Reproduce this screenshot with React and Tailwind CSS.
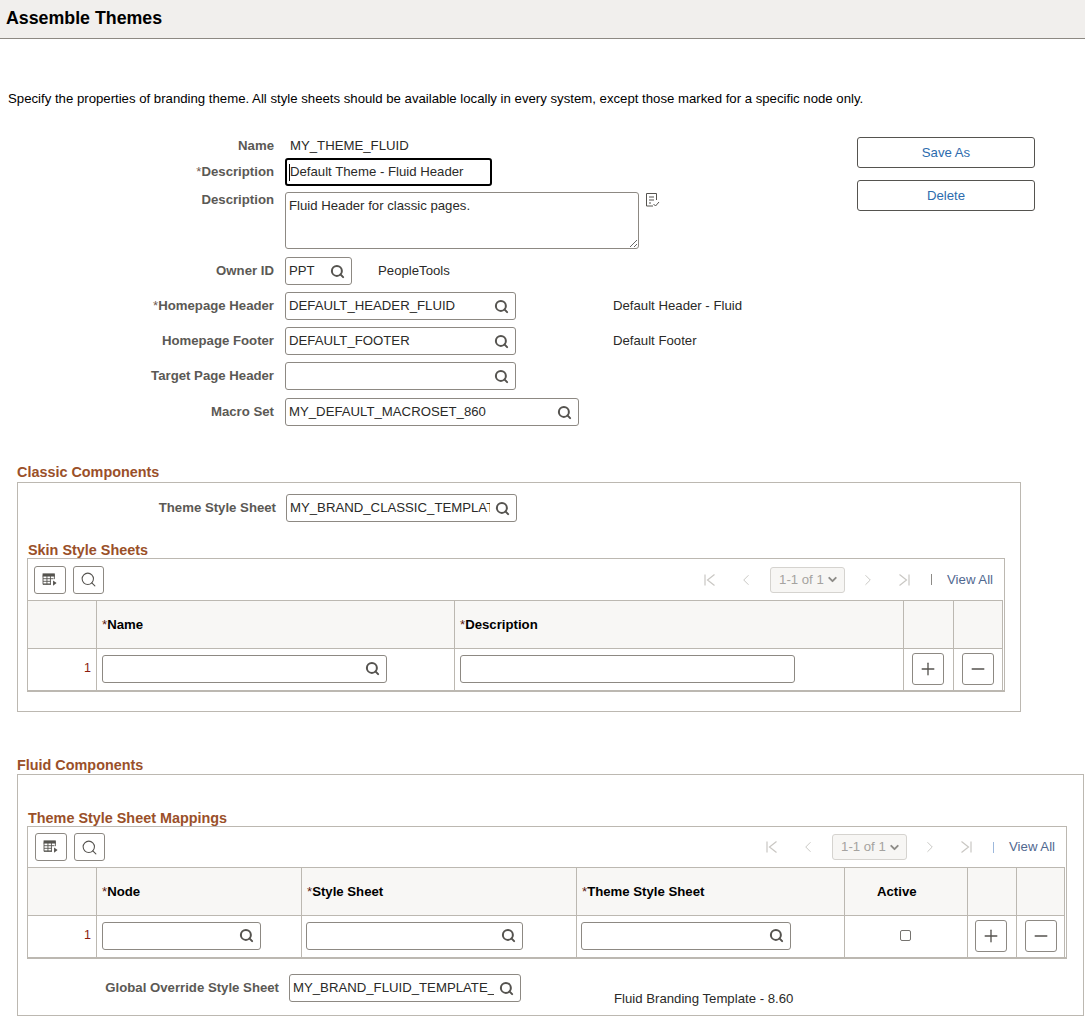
import { ChevronDown, ChevronLeft, ChevronRight, Minus, Plus, Search } from 'lucide-react';

const FONT = 'font-["Liberation_Sans",Arial,sans-serif]';

function Field({ value = '', width, icon = true, className = '' }) {
    return (
        <div className={`flex items-center h-[28px] bg-white border border-[#8d8983] rounded-[3px] pl-[3px] pr-[6px] ${width} ${className}`}>
            <input
                readOnly
                value={value}
                className="flex-1 min-w-0 bg-transparent outline-none text-[13.2px] text-[#2a2a28]"
            />
            {icon && <Search className="w-[15px] h-[15px] ml-[5px] shrink-0 text-[#55534f]" strokeWidth={3.2} />}
        </div>
    );
}

function FormRow({ label, required, top, height = 'h-[28px]', children, labelClass = 'items-center' }) {
    return (
        <div className={`flex ${height} ${top}`}>
            <div className={`w-[274px] flex justify-end text-[13.2px] leading-[16px] font-bold text-[#5b5955] ${labelClass}`}>
                {required && <span className="font-normal text-[#6f5a50]">*</span>}
                {label}
            </div>
            <div className="ml-[11px] flex items-center">{children}</div>
        </div>
    );
}

function SectionTitle({ children, className = '' }) {
    return <div className={`text-[14.4px] leading-[16px] font-bold text-[#9a5029] ${className}`}>{children}</div>;
}

function GridIcon() {
    return (
        <svg width="16" height="14" viewBox="0 0 18 16" fill="none" stroke="#55534f" strokeWidth="1">
            <rect x="1" y="1" width="13" height="2.5" fill="#55534f" />
            <path d="M1 3v10h9M1 6.5h12M1 9.5h9M1 12.5h9M5.5 3v10M9.5 3v10M14 3v4" />
            <path d="M12.5 8.5l4 3-4 3z" fill="#55534f" stroke="none" />
        </svg>
    );
}

function IconButton({ children, width = 'w-[32px]', height = 'h-[28px]' }) {
    return (
        <button className={`flex items-center justify-center bg-white border border-[#8d8983] rounded-[3px] ${width} ${height}`}>
            {children}
        </button>
    );
}

function Pager({ dividerColor }) {
    return (
        <div className="flex items-center text-[#c9c7c3]">
            <svg width="14" height="14" viewBox="0 0 14 14" fill="none" stroke="currentColor" strokeWidth="1.2">
                <path d="M2 1.5v11M11.5 1.5L4.5 7l7 5.5" />
            </svg>
            <ChevronLeft className="w-[18px] h-[18px] ml-[20px]" strokeWidth={1.3} />
            <div className="flex items-center justify-between h-[26px] w-[75px] ml-[15px] bg-[#f7f6f4] border border-[#d5d3cf] rounded-[3px] pl-[8px] pr-[5px] text-[13.2px] whitespace-nowrap text-[#a5a3a0]">
                1-1 of 1
                <ChevronDown className="w-[13px] h-[13px] text-[#8d8b87]" strokeWidth={3.5} />
            </div>
            <ChevronRight className="w-[18px] h-[18px] ml-[14px]" strokeWidth={1.3} />
            <svg width="14" height="14" viewBox="0 0 14 14" fill="none" stroke="currentColor" strokeWidth="1.2" className="ml-[20px]">
                <path d="M12 1.5v11M2.5 1.5L9.5 7l-7 5.5" />
            </svg>
            <span className={`w-px h-[11px] ml-[20px] ${dividerColor}`} />
            <span className="ml-[15px] text-[13.2px] text-[#51688f]">View All</span>
        </div>
    );
}

function Toolbar({ divider, className }) {
    return (
        <div className={`flex items-center justify-between pr-[10px] ${className}`}>
            <div className="flex items-center gap-[7px]">
                <IconButton><GridIcon /></IconButton>
                <IconButton width="w-[31px]">
                    <Search className="w-[17px] h-[17px] text-[#55534f]" strokeWidth={1.5} />
                </IconButton>
            </div>
            <Pager dividerColor={divider} />
        </div>
    );
}

function HeadCell({ children, className = '' }) {
    return (
        <div className={`flex items-center h-[48px] bg-[#f8f7f5] border-t border-l border-[#bcb8b1] pl-[5px] text-[13.2px] font-bold text-black ${className}`}>
            {children}
        </div>
    );
}

function BodyCell({ children, className = '' }) {
    return (
        <div className={`flex items-center h-[42px] pb-[2px] border-t border-l border-[#bcb8b1] ${className}`}>
            {children}
        </div>
    );
}

function Required({ children }) {
    return (
        <>
            <span className="font-normal text-[#5a1a10]">*</span>
            {children}
        </>
    );
}

function RowButtons() {
    return (
        <>
            <BodyCell className="justify-center pr-[2px]">
                <IconButton height="h-[32px]"><Plus className="w-[20px] h-[20px] text-[#55534f]" strokeWidth={1.6} /></IconButton>
            </BodyCell>
            <BodyCell className="justify-center border-r">
                <IconButton height="h-[32px]"><Minus className="w-[20px] h-[20px] text-[#55534f]" strokeWidth={1.6} /></IconButton>
            </BodyCell>
        </>
    );
}

export default function App() {
    return (
        <div className={`${FONT} w-[1085px] h-[1017px] overflow-hidden bg-white text-[13.2px] text-[#2a2a28]`}>
            <div className="flex items-center h-[39px] bg-[#f1efed] border-b border-[#8d8983] pl-[6px] pb-[2px]">
                <h1 className="text-[17.8px] font-bold text-black">Assemble Themes</h1>
            </div>

            <p className="mt-[52px] pl-[8px] text-[13.2px] leading-[16px] text-black">
                Specify the properties of branding theme. All style sheets should be available locally in every system, except those marked for a specific node only.
            </p>

            {/* Form and action buttons */}
            <div className="flex mt-[30px]">
                <div className="w-[857px]">
                    <FormRow label="Name" height="h-[18px]">
                        <span className="pl-[5px]">MY_THEME_FLUID</span>
                    </FormRow>
                    <FormRow label="Description" required top="mt-[3px]">
                        <div className="flex items-center w-[207px] h-[28px] border-2 border-black rounded-[3px] pl-[2px]">
                            <span className="w-px h-[17px] bg-black" />
                            <span>Default Theme - Fluid Header</span>
                        </div>
                    </FormRow>
                    <FormRow label="Description" height="h-[57px]" top="mt-[6px]" labelClass="items-start">
                        <div className="flex items-start h-full">
                            <textarea
                                readOnly
                                value="Fluid Header for classic pages."
                                className="block w-[354px] h-[57px] border border-[#8d8983] rounded-[3px] px-[3px] py-[5px] text-[13.2px] leading-[16px] outline-none"
                            />
                            <svg width="16" height="16" viewBox="0 0 16 16" fill="none" stroke="#55534f" strokeWidth="1" className="ml-[5px]">
                                <path d="M9 14H2.5V1.5h10V8M5 5h5M5 8h5M5 11h2M9.5 12l2 2 3.5-4" />
                            </svg>
                        </div>
                    </FormRow>
                    <FormRow label="Owner ID" top="mt-[8px]">
                        <Field value="PPT" width="w-[67px]" />
                        <span className="ml-[26px]">PeopleTools</span>
                    </FormRow>
                    <FormRow label="Homepage Header" required top="mt-[7px]">
                        <Field value="DEFAULT_HEADER_FLUID" width="w-[231px]" />
                        <span className="ml-[97px]">Default Header - Fluid</span>
                    </FormRow>
                    <FormRow label="Homepage Footer" top="mt-[7px]">
                        <Field value="DEFAULT_FOOTER" width="w-[231px]" />
                        <span className="ml-[97px]">Default Footer</span>
                    </FormRow>
                    <FormRow label="Target Page Header" top="mt-[7px]">
                        <Field width="w-[231px]" />
                    </FormRow>
                    <FormRow label="Macro Set" top="mt-[8px]">
                        <Field value="MY_DEFAULT_MACROSET_860" width="w-[294px]" />
                    </FormRow>
                </div>
                <div className="flex flex-col gap-[12px] w-[178px]">
                    <button className="h-[31px] bg-white border border-[#55534f] rounded-[3px] text-[13.2px] text-[#2c6cae]">Save As</button>
                    <button className="h-[31px] bg-white border border-[#55534f] rounded-[3px] text-[13.2px] text-[#2c6cae]">Delete</button>
                </div>
            </div>

            {/* Classic Components */}
            <SectionTitle className="mt-[38px] ml-[17px]">Classic Components</SectionTitle>
            <div className="ml-[17px] mt-[2px] w-[1004px] h-[230px] border border-[#bcb8b1] pl-[9px]">
                <div className="flex items-center mt-[11px]">
                    <div className="w-[249px] text-right font-bold text-[#5b5955]">Theme Style Sheet</div>
                    <Field value="MY_BRAND_CLASSIC_TEMPLATE" width="w-[231px]" className="ml-[10px]" />
                </div>
                <SectionTitle className="mt-[20px] ml-[1px]">Skin Style Sheets</SectionTitle>
                <div className="w-[978px] border border-[#bcb8b1] border-b-2 pr-[1px]">
                    <Toolbar className="h-[41px] pl-[6px]" divider="bg-[#8d8b87]" />
                    <div className="grid grid-cols-[68px_358px_449px_50px_50px]">
                        <HeadCell className="border-l-0" />
                        <HeadCell><Required>Name</Required></HeadCell>
                        <HeadCell><Required>Description</Required></HeadCell>
                        <HeadCell />
                        <HeadCell className="border-r" />
                        <BodyCell className="border-l-0 justify-end pr-[5px] text-[12.5px] text-[#8c1c0f]">1</BodyCell>
                        <BodyCell className="pl-[5px]"><Field width="w-[285px]" /></BodyCell>
                        <BodyCell className="pl-[5px]"><Field width="w-[335px]" icon={false} /></BodyCell>
                        <RowButtons />
                    </div>
                </div>
            </div>

            {/* Fluid Components */}
            <SectionTitle className="mt-[45px] ml-[17px]">Fluid Components</SectionTitle>
            <div className="ml-[17px] mt-[1px] w-[1067px] h-[242px] border border-[#bcb8b1] pl-[9px]">
                <SectionTitle className="mt-[35px] ml-[1px]">Theme Style Sheet Mappings</SectionTitle>
                <div className="w-[1040px] border border-[#bcb8b1] border-b-2 pr-[1px]">
                    <Toolbar className="h-[40px] pl-[7px]" divider="bg-[#9db8dc]" />
                    <div className="grid grid-cols-[68px_205px_275px_268px_123px_49px_49px]">
                        <HeadCell className="border-l-0" />
                        <HeadCell><Required>Node</Required></HeadCell>
                        <HeadCell><Required>Style Sheet</Required></HeadCell>
                        <HeadCell><Required>Theme Style Sheet</Required></HeadCell>
                        <HeadCell className="pl-[32px]">Active</HeadCell>
                        <HeadCell />
                        <HeadCell className="border-r" />
                        <BodyCell className="border-l-0 justify-end pr-[5px] text-[12.5px] text-[#8c1c0f]">1</BodyCell>
                        <BodyCell className="pl-[5px]"><Field width="w-[159px]" /></BodyCell>
                        <BodyCell className="pl-[4px]"><Field width="w-[217px]" /></BodyCell>
                        <BodyCell className="pl-[4px]"><Field width="w-[210px]" /></BodyCell>
                        <BodyCell className="justify-center pr-[2px]">
                            <input type="checkbox" readOnly className="w-[11px] h-[11px] appearance-none border border-[#75736f] rounded-[2px] bg-white" />
                        </BodyCell>
                        <RowButtons />
                    </div>
                </div>
                <div className="flex items-start mt-[15px]">
                    <div className="w-[252px] h-[28px] flex items-center justify-end font-bold text-[#5b5955]">Global Override Style Sheet</div>
                    <Field value="MY_BRAND_FLUID_TEMPLATE_CSS" width="w-[232px]" className="ml-[10px]" />
                    <span className="ml-[93px] mt-[15px]">Fluid Branding Template - 8.60</span>
                </div>
            </div>
        </div>
    );
}
